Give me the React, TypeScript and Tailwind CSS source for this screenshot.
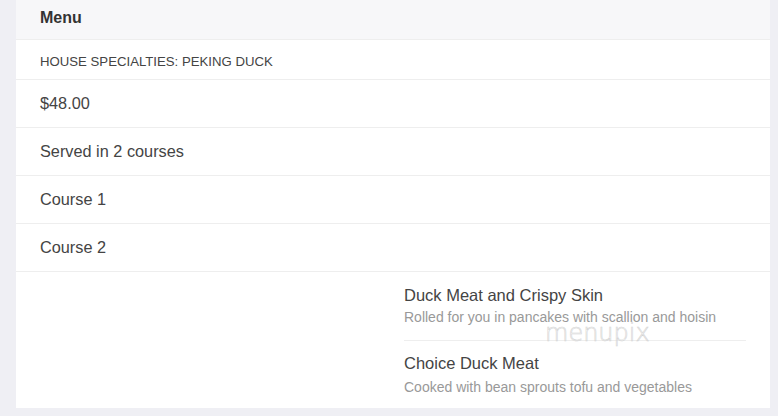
import React from 'react'

const rows = ['$48.00', 'Served in 2 courses', 'Course 1', 'Course 2']

const items = [
  { name: 'Duck Meat and Crispy Skin', desc: 'Rolled for you in pancakes with scallion and hoisin' },
  { name: 'Choice Duck Meat', desc: 'Cooked with bean sprouts tofu and vegetables' },
]

export default function App() {
  return (
    <div className="min-h-screen bg-[#efeff4] pl-4 pr-2 pb-2 text-[#333]" style={{ fontFamily: '"Liberation Sans", Arial, sans-serif' }}>
      <div className="bg-white">
        <div className="h-10 bg-[#f7f7f9] pl-6 pb-1 flex items-center border-b border-[#eeeeee]">
          <span className="text-[16px] font-bold text-[#333]">Menu</span>
        </div>
        <div className="h-10 pl-6 pt-1 flex items-center border-b border-[#eeeeee]">
          <span className="text-[13.2px] text-[#444] uppercase">House Specialties: Peking Duck</span>
        </div>
        {rows.map(r => (
          <div key={r} className="h-12 pl-6 flex items-center border-b border-[#eeeeee]">
            <span className="text-[16.3px] text-[#444]">{r}</span>
          </div>
        ))}
        <div className="relative pl-[388px] pr-6">
          {items.map((it, i) => (
            <div key={it.name} className={i === 0 ? 'pt-[13px] pb-[14px] border-b border-[#eeeeee]' : 'pt-[12px] pb-[12px]'}>
              <div className="text-[16.5px] leading-5 text-[#444]">{it.name}</div>
              <div className={`${i === 0 ? 'mt-[3px]' : 'mt-[5px]'} text-[14px] leading-[18px] text-[#999]`}>{it.desc}</div>
            </div>
          ))}
          <div aria-hidden="true" className="absolute left-[529px] top-[43px] text-[24px] font-light text-transparent select-none pointer-events-none" style={{ WebkitTextStroke: '0.6px #d4d4d4', fontFamily: '"DejaVu Sans", sans-serif' }}>menupix</div>
        </div>
      </div>
    </div>
  )
}
